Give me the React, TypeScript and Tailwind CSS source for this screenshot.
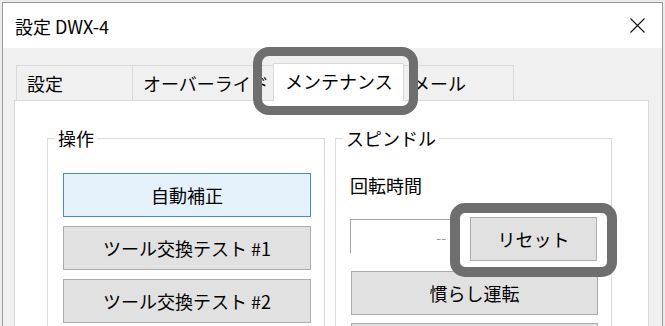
import React from "react";

const btn =
  "flex items-center justify-center h-[44px] w-full border border-[#adadad] bg-[#e1e1e1] text-[18px] leading-[24px] text-black";

export default function App() {
  return (
    <div className="relative w-[665px] h-[326px] overflow-hidden bg-[#ececec] pt-[2px] pl-[2px] font-['Noto_Sans_CJK_JP','Noto_Sans',sans-serif] text-black">
      <div className="w-[661px] h-[340px] border-l border-t border-r border-[#9a9a9a] bg-[#f0f0f0] flex flex-col">
        {/* title bar */}
        <div className="h-[45px] bg-white flex items-center justify-between pl-[12px] pr-[17px] shrink-0">
          <span className="text-[18px] leading-[24px]">設定 DWX-4</span>
          <svg width="15" height="15" viewBox="0 0 15 15" className="block">
            <path d="M0.5 0.5 L14.5 14.5 M14.5 0.5 L0.5 14.5" stroke="#111" strokeWidth="1.1" fill="none" />
          </svg>
        </div>
        {/* body */}
        <div className="pl-[11px] pt-[15px] flex flex-col">
          {/* tab strip */}
          <div className="flex items-end h-[37px] pl-[2px] relative z-10">
            <div className="w-[117px] h-[35px] border-t border-l border-r border-[#d9d9d9] bg-[#f0f0f0] flex items-center pl-[10px] text-[18px] leading-[24px]">
              設定
            </div>
            <div className="-ml-px w-[143px] h-[35px] border-t border-l border-r border-[#d9d9d9] bg-[#f0f0f0] flex items-center pl-[10px] text-[18px] leading-[24px] whitespace-nowrap overflow-hidden">
              オーバーライド
            </div>
            <div className="-ml-[2px] w-[131px] h-[38px] -mb-px border-t border-l border-r border-[#d9d9d9] bg-white flex items-center pl-[11px] pb-[4px] text-[18px] leading-[24px] relative z-10 whitespace-nowrap">
              メンテナンス
            </div>
            <div className="-ml-px w-[111px] h-[35px] border-t border-l border-r border-[#d9d9d9] bg-[#f0f0f0] flex items-center pl-[8px] text-[18px] leading-[24px]">
              メール
            </div>
          </div>
          {/* panel */}
          <div className="w-[635px] h-[240px] border border-[#d9d9d9] bg-white flex gap-[10px] pl-[32px] pt-[25px]">
            <fieldset className="w-[278px] border border-[#dcdcdc] m-0 p-0 min-w-0 self-start h-[220px]">
              <legend className="ml-[7px] px-[3px] text-[18px] leading-[24px]">操作</legend>
              <div className="pl-[15px] pr-[13px] pt-[23px] flex flex-col gap-[9px]">
                <div className="flex items-center justify-center h-[44px] w-full border border-[#3a8ee6] bg-[#e5f1fb] text-[18px] leading-[24px]">
                  自動補正
                </div>
                <div className={btn}>ツール交換テスト #1</div>
                <div className={btn}>ツール交換テスト #2</div>
              </div>
            </fieldset>
            <fieldset className="w-[277px] border border-[#dcdcdc] m-0 p-0 min-w-0 self-start h-[220px]">
              <legend className="ml-[7px] px-[3px] text-[18px] leading-[24px]">スピンドル</legend>
              <div className="pl-[15px] pr-[13px] pt-[23px] flex flex-col">
                <div className="text-[18px] leading-[24px] -ml-px">回転時間</div>
                <div className="mt-[20px] flex items-start">
                  <div className="-ml-px mt-[2px] w-[106px] h-[34px] border-t border-l border-[#a3a3a3] bg-white flex items-center justify-end pr-[10px] text-[14px] leading-[20px] text-[#9a9a9a]">
                    --
                  </div>
                  <div className="ml-[14px] w-[127px] h-[44px] border border-[#adadad] bg-[#e1e1e1] flex items-center justify-center text-[18px] leading-[24px]">
                    リセット
                  </div>
                </div>
                <div className={btn + " mt-[10px]"}>慣らし運転</div>
                <div className={btn + " mt-[8px]"} />
              </div>
            </fieldset>
          </div>
        </div>
      </div>
      {/* annotation highlights */}
      <div className="absolute left-[253px] top-[47px] w-[165px] h-[68px] border-[9px] border-[#6e6e6e] rounded-[16px] z-20" />
      <div className="absolute left-[450px] top-[203px] w-[167px] h-[74px] border-[10px] border-[#6e6e6e] rounded-[15px] z-20" />
    </div>
  );
}
